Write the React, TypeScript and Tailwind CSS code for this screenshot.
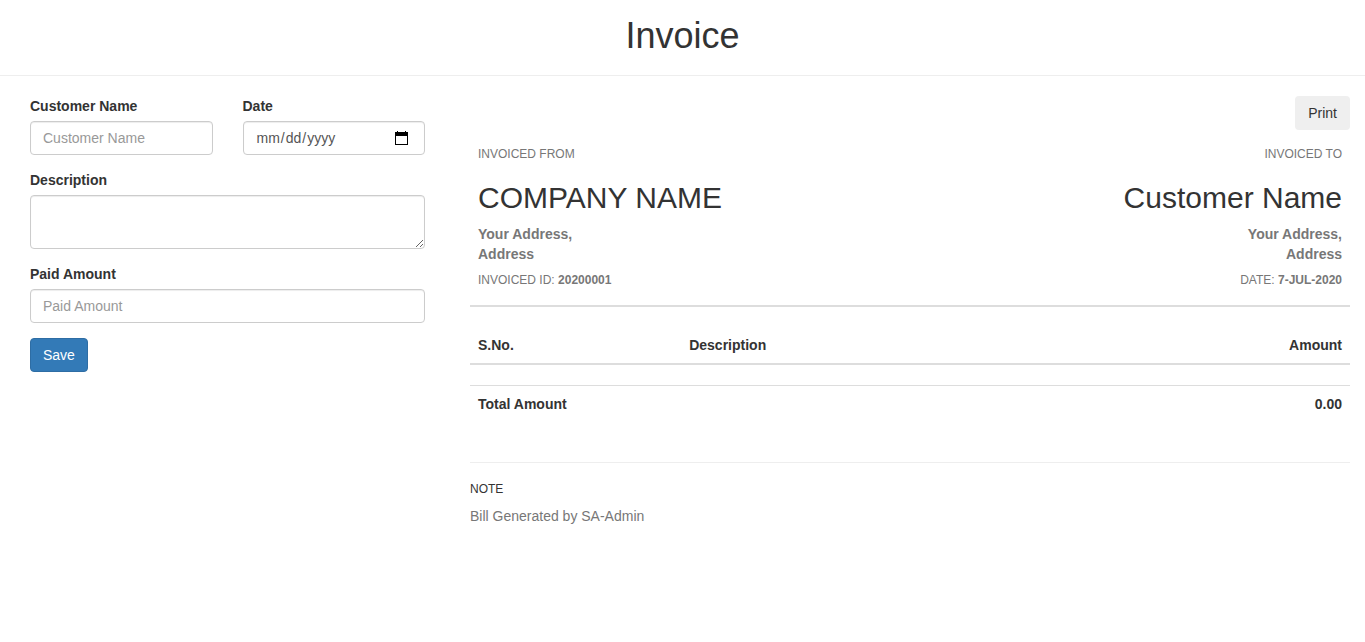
const label = "mb-[5px] block font-bold";
const control =
  "block w-full rounded-[4px] border border-[#ccc] bg-white px-3 py-1.5 text-sm leading-5 text-[#555] shadow-[inset_0_1px_1px_rgba(0,0,0,0.075)] outline-none placeholder:text-[#999] focus:border-[#66afe9]";

type PartyProps = {
  heading: string;
  name: string;
  reference: string;
  value: string;
};

function CalendarIcon() {
  return (
    <svg
      aria-hidden="true"
      className="pointer-events-none absolute top-2.5 right-4 h-3.5 w-[15px]"
      viewBox="0 0 15 14"
      fill="black"
      shapeRendering="crispEdges"
    >
      <path fillRule="evenodd" d="M1 1h2V0h1v1h7V0h1v1h2v13H1zM2 5v8h11V5z" />
    </svg>
  );
}

function Party({ heading, name, reference, value }: PartyProps) {
  return (
    <div className="p-2 text-[#777]">
      <h5 className="my-2.5 text-xs leading-[13px]">{heading}</h5>
      <h2 className="mt-5 mb-2.5 text-3xl leading-[33px] text-[#333]">{name}</h2>
      <p className="font-bold">
        Your Address,
        <br />
        Address
      </p>
      <h5 className="my-2.5 text-xs leading-[13px]">
        {reference} <strong>{value}</strong>
      </h5>
    </div>
  );
}

function InvoiceForm() {
  return (
    <form className="flex flex-col gap-[15px] px-[15px]" onSubmit={(e) => e.preventDefault()}>
      <div className="grid grid-cols-2 gap-[30px]">
        <div>
          <label htmlFor="customer" className={label}>Customer Name</label>
          <input id="customer" type="text" placeholder="Customer Name" className={`${control} h-[34px]`} />
        </div>
        <div>
          <label htmlFor="date" className={label}>Date</label>
          <div className="relative">
            <input
              id="date"
              type="date"
              className={`${control} h-[34px] [&::-webkit-calendar-picker-indicator]:opacity-0`}
            />
            <CalendarIcon />
          </div>
        </div>
      </div>
      <div>
        <label htmlFor="description" className={label}>Description</label>
        <textarea id="description" rows={2} className={`${control} resize-y`} />
      </div>
      <div>
        <label htmlFor="paid" className={label}>Paid Amount</label>
        <input id="paid" type="text" placeholder="Paid Amount" className={`${control} h-[34px]`} />
      </div>
      <button
        type="submit"
        className="cursor-pointer self-start rounded-[4px] border border-[#2e6da4] bg-[#337ab7] px-3 py-1.5 text-white"
      >
        Save
      </button>
    </form>
  );
}

function InvoicePreview() {
  return (
    <section>
      <div className="flex justify-end">
        <button
          type="button"
          className="cursor-pointer rounded-[4px] border border-transparent bg-[#efefef] px-3 py-1.5"
        >
          Print
        </button>
      </div>
      <div className="mb-5 flex justify-between border-b-2 border-[#ddd]">
        <Party heading="INVOICED FROM" name="COMPANY NAME" reference="INVOICED ID:" value="20200001" />
        <div className="text-right">
          <Party heading="INVOICED TO" name="Customer Name" reference="DATE:" value="7-JUL-2020" />
        </div>
      </div>
      <table className="mb-5 w-full table-fixed border-separate border-spacing-0">
        <thead>
          <tr>
            <th className="w-[24%] border-b-2 border-[#ddd] p-2 text-left">S.No.</th>
            <th className="border-b-2 border-[#ddd] p-2 text-left">Description</th>
            <th className="border-b-2 border-[#ddd] p-2 text-right">Amount</th>
          </tr>
        </thead>
      </table>
      <table className="mb-10 w-full border-separate border-spacing-0">
        <tbody>
          <tr>
            <th className="border-t border-[#ddd] p-2 text-left">Total Amount</th>
            <th className="border-t border-[#ddd] p-2 text-right">0.00</th>
          </tr>
        </tbody>
      </table>
      <hr className="mb-5 border-[#eee]" />
      <h5 className="mb-2.5 text-xs leading-[13px]">NOTE</h5>
      <p className="text-[#777]">Bill Generated by SA-Admin</p>
    </section>
  );
}

export default function App() {
  return (
    <main className="min-h-screen bg-white pt-4 font-['Liberation_Sans',Arial,sans-serif] text-sm leading-5 text-[#333]">
      <h1 className="text-center text-4xl leading-[39px]">Invoice</h1>
      <hr className="my-5 border-[#eee]" />
      <div className="grid grid-cols-3 gap-[30px] px-[15px]">
        <InvoiceForm />
        <div className="col-span-2">
          <InvoicePreview />
        </div>
      </div>
    </main>
  );
}
